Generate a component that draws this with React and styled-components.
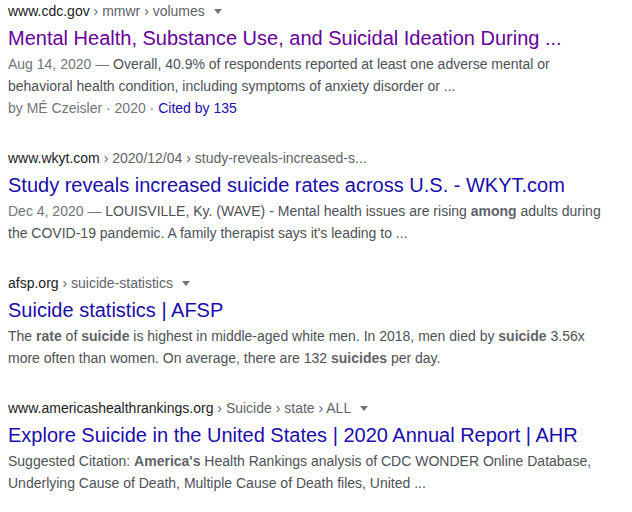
import React from 'react';
import styled, { createGlobalStyle } from 'styled-components';

const GlobalStyle = createGlobalStyle`
  html, body {
    margin: 0;
    padding: 0;
    background: #fff;
  }
  body {
    font-family: "Liberation Sans", Arial, sans-serif;
  }
`

const Results = styled.div`
  padding: 2px 8px 0;
  width: 600px;
`

const Result = styled.div`
  margin-bottom: 30px;
`

const Cite = styled.div`
  font-size: 14px;
  line-height: 18px;
  color: #5f6368;
  white-space: nowrap;
`

const Domain = styled.span`
  color: #202124;
`

const Arrow = styled.span`
  display: inline-block;
  vertical-align: middle;
  margin-left: 9px;
  margin-top: -2px;
  border-left: 4px solid transparent;
  border-right: 4px solid transparent;
  border-top: 5px solid #70757a;
`

const Title = styled.h3`
  margin: 5px 0 2px;
  font-size: 20px;
  font-weight: normal;
  line-height: 26px;
  color: ${p => (p.$visited ? '#660099' : '#1a0dab')};
  white-space: nowrap;
`

const Snippet = styled.div`
  font-size: 14px;
  line-height: 22px;
  color: #4d5156;

  b {
    color: #5f6368;
  }
`

const Date = styled.span`
  color: #70757a;
`

const Byline = styled.div`
  font-size: 14px;
  line-height: 22px;
  color: #70757a;
`

const Cited = styled.span`
  color: #1a0dab;
`

function Crumbs({ domain, path, menu }) {
  return (
    <Cite>
      <Domain>{domain}</Domain>
      <span>{' › ' + path.join(' › ')}</span>
      {menu && <Arrow />}
    </Cite>
  )
}

export default function App() {
  return (
    <>
      <GlobalStyle />
      <Results>
        <Result>
          <Crumbs domain="www.cdc.gov" path={['mmwr', 'volumes']} menu />
          <Title $visited>Mental Health, Substance Use, and Suicidal Ideation During ...</Title>
          <Snippet>
            <Date>Aug 14, 2020 — </Date>Overall, 40.9% of respondents reported at least one adverse mental or behavioral health condition, including symptoms of anxiety disorder or ...
          </Snippet>
          <Byline>
            by MÉ Czeisler · 2020 · <Cited>Cited by 135</Cited>
          </Byline>
        </Result>

        <Result>
          <Crumbs domain="www.wkyt.com" path={['2020/12/04', 'study-reveals-increased-s...']} />
          <Title>Study reveals increased suicide rates across U.S. - WKYT.com</Title>
          <Snippet>
            <Date>Dec 4, 2020 — </Date>LOUISVILLE, Ky. (WAVE) - Mental health issues are rising <b>among</b> adults during the COVID-19 pandemic. A family therapist says it's leading to ...
          </Snippet>
        </Result>

        <Result>
          <Crumbs domain="afsp.org" path={['suicide-statistics']} menu />
          <Title>Suicide statistics | AFSP</Title>
          <Snippet>
            The <b>rate</b> of <b>suicide</b> is highest in middle-aged white men. In 2018, men died by <b>suicide</b> 3.56x more often than women. On average, there are 132 <b>suicides</b> per day.
          </Snippet>
        </Result>

        <Result>
          <Crumbs domain="www.americashealthrankings.org" path={['Suicide', 'state', 'ALL']} menu />
          <Title>Explore Suicide in the United States | 2020 Annual Report | AHR</Title>
          <Snippet>
            Suggested Citation: <b>America's</b> Health Rankings analysis of CDC WONDER Online Database, Underlying Cause of Death, Multiple Cause of Death files, United ...
          </Snippet>
        </Result>
      </Results>
    </>
  )
}
